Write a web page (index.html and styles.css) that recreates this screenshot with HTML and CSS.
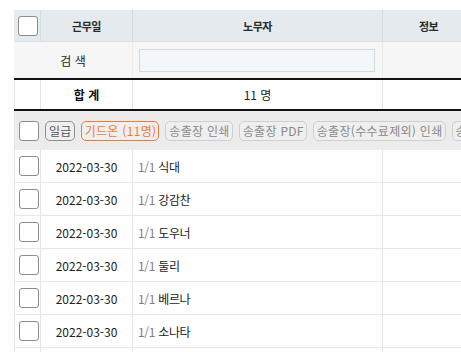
FILE: index.html
```html
<!DOCTYPE html>
<html lang="ko">
<head>
<meta charset="utf-8">
<title>근무일</title>
<link rel="stylesheet" href="styles.css">
</head>
<body>
<div class="sheet">
  <div class="row head">
    <div class="cell c1"><span class="chk"></span></div>
    <div class="cell c2">근무일</div>
    <div class="cell c3">노무자</div>
    <div class="cell c4">정보</div>
    <div class="cell c5"></div>
  </div>
  <div class="row search">
    <div class="cell c12">검 색</div>
    <div class="cell c3 pad"><input class="field" type="text"></div>
    <div class="cell c4"></div>
    <div class="cell c5"></div>
  </div>
  <div class="row total">
    <div class="cell c1"></div>
    <div class="cell c2 bold">합 계</div>
    <div class="cell c3">11 명</div>
    <div class="cell c4"></div>
    <div class="cell c5"></div>
  </div>
  <div class="row tools">
    <span class="chk"></span>
    <span class="btn dark">일급</span>
    <span class="btn orange">기드온 (11명)</span>
    <span class="btn">송출장 인쇄</span>
    <span class="btn">송출장 PDF</span>
    <span class="btn">송출장(수수료제외) 인쇄</span>
    <span class="btn">송출장 엑셀</span>
  </div>
  <div class="row data">
    <div class="cell c1"><span class="chk"></span></div>
    <div class="cell c2">2022-03-30</div>
    <div class="cell c3 name"><span class="frac">1/1</span> 식대</div>
    <div class="cell c4"></div>
    <div class="cell c5"></div>
  </div>
  <div class="row data">
    <div class="cell c1"><span class="chk"></span></div>
    <div class="cell c2">2022-03-30</div>
    <div class="cell c3 name"><span class="frac">1/1</span> 강감찬</div>
    <div class="cell c4"></div>
    <div class="cell c5"></div>
  </div>
  <div class="row data">
    <div class="cell c1"><span class="chk"></span></div>
    <div class="cell c2">2022-03-30</div>
    <div class="cell c3 name"><span class="frac">1/1</span> 도우너</div>
    <div class="cell c4"></div>
    <div class="cell c5"></div>
  </div>
  <div class="row data">
    <div class="cell c1"><span class="chk"></span></div>
    <div class="cell c2">2022-03-30</div>
    <div class="cell c3 name"><span class="frac">1/1</span> 둘리</div>
    <div class="cell c4"></div>
    <div class="cell c5"></div>
  </div>
  <div class="row data">
    <div class="cell c1"><span class="chk"></span></div>
    <div class="cell c2">2022-03-30</div>
    <div class="cell c3 name"><span class="frac">1/1</span> 베르나</div>
    <div class="cell c4"></div>
    <div class="cell c5"></div>
  </div>
  <div class="row data">
    <div class="cell c1"><span class="chk"></span></div>
    <div class="cell c2">2022-03-30</div>
    <div class="cell c3 name"><span class="frac">1/1</span> 소나타</div>
    <div class="cell c4"></div>
    <div class="cell c5"></div>
  </div>
  <div class="row data">
    <div class="cell c1"><span class="chk"></span></div>
    <div class="cell c2">2022-03-30</div>
    <div class="cell c3 name"><span class="frac">1/1</span> 고길동</div>
    <div class="cell c4"></div>
    <div class="cell c5"></div>
  </div>
</div>
</body>
</html>
```
FILE: styles.css
```css
html, body {
  margin: 0;
  padding: 0;
  overflow: hidden;
  background: #ffffff;
}
body {
  font-family: "Noto Sans CJK KR", "Noto Sans", sans-serif;
  font-size: 12px;
  color: #222;
}
.sheet {
  margin: 10px 0 0 14px;
  width: 700px;
}
.row {
  display: grid;
  grid-template-columns: 27px 92px 250px 92px 239px;
  box-sizing: border-box;
}
.cell {
  box-sizing: border-box;
  display: flex;
  align-items: center;
  justify-content: center;
  border-right: 1px solid #e6e6e6;
  white-space: nowrap;
}
.c1 { border-left: 1px solid #e6e6e6; justify-content: flex-start; padding-left: 4px; }
.c12 { grid-column: span 2; }
.c5 { border-right: none; }

.head { height: 32px; background: #e4eaee; border-bottom: 1px solid #d9e1e5; }
.head .cell { border-right-color: #d3dce1; font-size: 11px; font-weight: bold; color: #2a2a2a; letter-spacing: -0.5px; }
.head .c1 { border-left-color: #e4eaee; padding-left: 3px; }

.search { height: 36px; background: #f6f6f6; }
.search .cell { border-right-color: #ececec; }
.search .pad { padding: 0 7px 0 6px; }
.field {
  box-sizing: border-box;
  width: 100%;
  height: 23px;
  margin: 0;
  border: 1px solid #cfdbe1;
  background: #f4f7f9;
  outline: none;
}

.total { height: 33px; border-top: 2px solid #111; border-bottom: 2px solid #111; }
.bold { font-weight: bold; color: #111; }

.tools {
  display: flex;
  align-items: center;
  gap: 6px;
  height: 39px;
  padding-left: 4px;
  background: #ececec;
  border-left: 1px solid #e6e6e6;
}
.btn {
  box-sizing: border-box;
  display: inline-flex;
  align-items: center;
  height: 20px;
  padding: 0 2px 0 3px;
  border: 1px solid #cfcfcf;
  border-radius: 5px;
  color: #8a8a8a;
  background: #efefef;
  white-space: nowrap;
  letter-spacing: 0.3px;
}
.btn.dark { border-color: #8e8e8e; color: #555; }
.btn.orange { border-color: #f07c33; color: #f07c33; }

.chk {
  box-sizing: border-box;
  display: inline-block;
  width: 20px;
  height: 20px;
  border: 1px solid #8c8c8c;
  border-radius: 3px;
  background: #fff;
  flex: none;
}

.data { height: 33px; border-bottom: 1px solid #e8e8e8; }
.data .c1 { padding-left: 4px; }
.name { justify-content: flex-start; padding-left: 5px; letter-spacing: -0.3px; }
.frac { color: #877b7d; margin-right: 3px; }
```
